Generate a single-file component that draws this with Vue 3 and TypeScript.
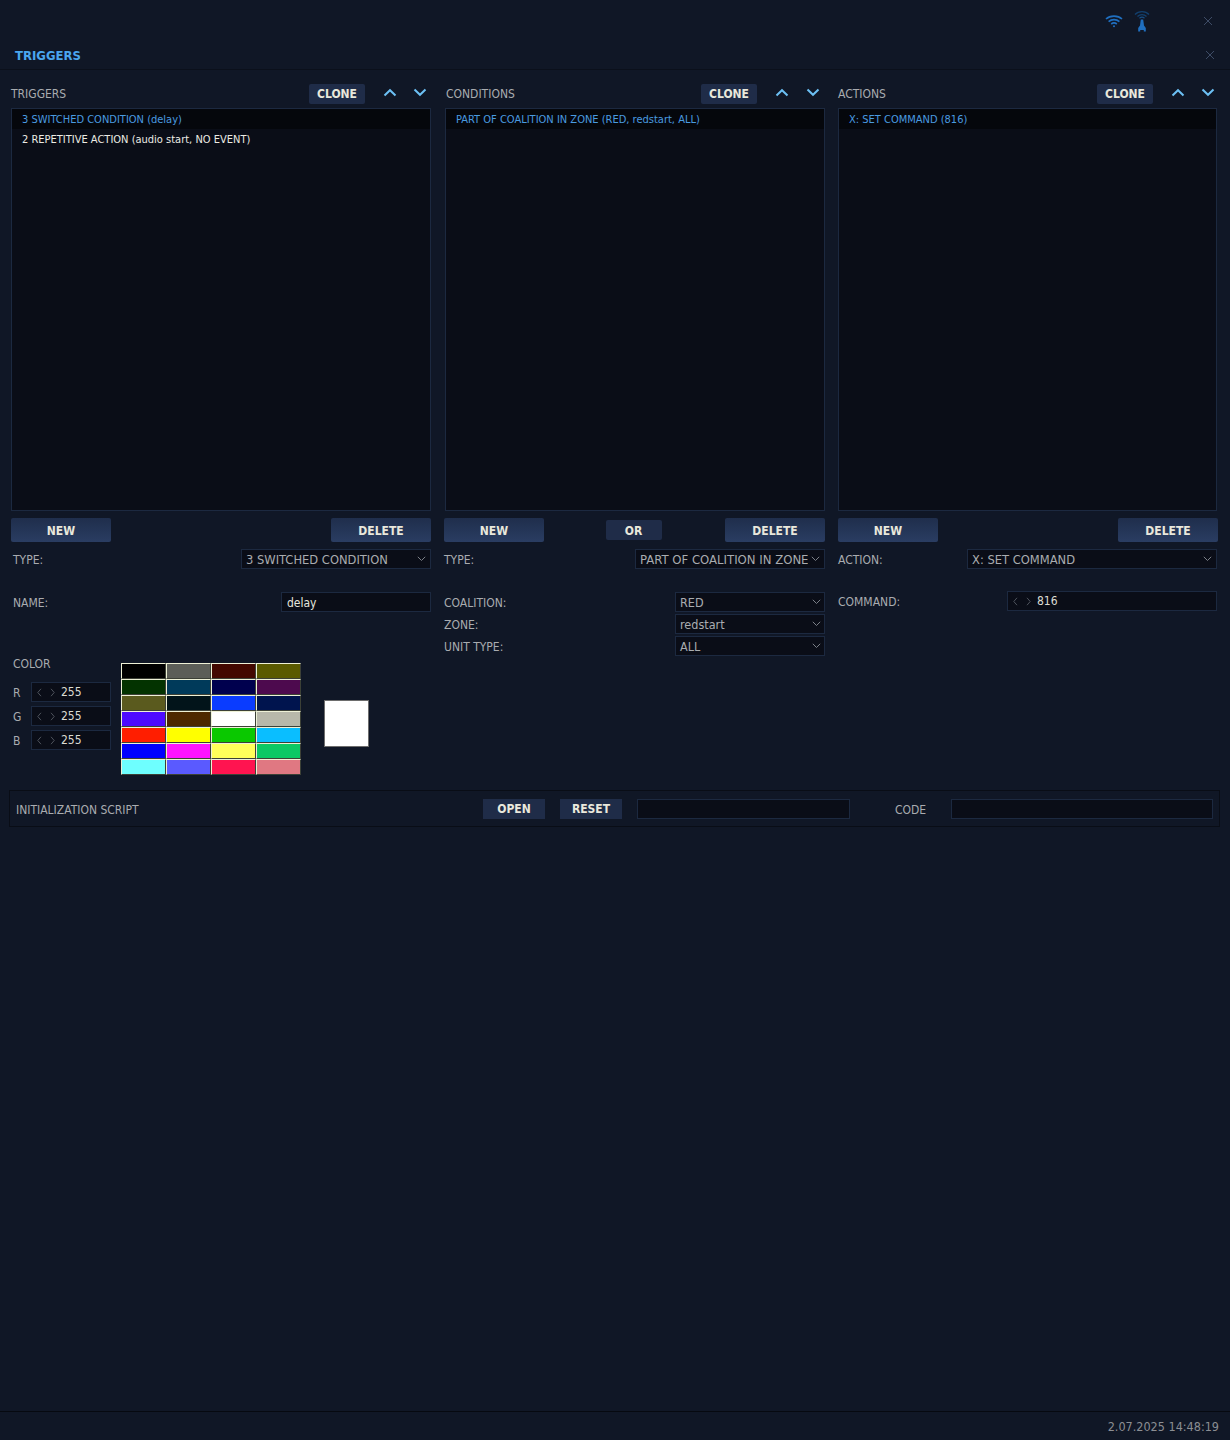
<script setup lang="ts">
const swatches: string[] = [
  '#000000', '#5c5e58', '#430800', '#5a5a00',
  '#033300', '#003a5a', '#00004e', '#4d0a4e',
  '#5a5a1e', '#02141a', '#0a3cff', '#00144e',
  '#4d0aff', '#4d2800', '#ffffff', '#b8b8aa',
  '#ff1e00', '#ffff00', '#0ac800', '#0abeff',
  '#0000ff', '#ff14ff', '#ffff5a', '#0ac864',
  '#6effff', '#5a5aff', '#ff1450', '#e07882',
]
const rgb = ['R', 'G', 'B']
const cond = [
  { label: 'COALITION:', value: 'RED' },
  { label: 'ZONE:', value: 'redstart' },
  { label: 'UNIT TYPE:', value: 'ALL' },
]
</script>

<template>
  <div class="page">
    <div class="status">
      <svg class="wifi" width="18" height="14" viewBox="0 0 18 14" fill="none" stroke="#1f6fc0" stroke-width="1.6">
        <path d="M1 5C5 1.2 13 1.2 17 5" />
        <path d="M3.6 7.6C6.6 5 11.4 5 14.4 7.6" />
        <path d="M6.2 10C8 8.6 10 8.6 11.8 10" />
        <circle cx="9" cy="12.2" r="1" fill="#1f6fc0" stroke="none" />
      </svg>
      <svg class="tower" width="16" height="22" viewBox="0 0 16 22" fill="none">
        <path d="M1 4.5C4.5 .6 11.5 .6 15 4.5" stroke="#12406e" stroke-width="1.3" />
        <path d="M3.5 6.5C6 4 10 4 12.5 6.5" stroke="#12406e" stroke-width="1.3" />
        <path d="M5.5 8.3C7 7 9 7 10.5 8.3" stroke="#174f86" stroke-width="1.2" />
        <path d="M6.8 9.5H9.2L10 15.5L11.8 18V21.5H9.8V20H6.2V21.5H4.2V18L6 15.5Z" fill="#1f6fc0" />
      </svg>
      <svg class="x x-top" width="10" height="10" viewBox="0 0 10 10" stroke="#3e4c66" stroke-width="1" fill="none">
        <path d="M1 1L9 9M9 1L1 9" />
      </svg>
    </div>

    <div class="titlebar">
      <span class="title">TRIGGERS</span>
      <svg class="x" width="10" height="10" viewBox="0 0 10 10" stroke="#3e4c66" stroke-width="1" fill="none">
        <path d="M1 1L9 9M9 1L1 9" />
      </svg>
    </div>

    <div class="columns">
      <section class="col col1">
        <header class="head">
          <span class="label">TRIGGERS</span>
          <button class="btn clone">CLONE</button>
          <svg class="arrow up" width="14" height="9" viewBox="0 0 14 9" fill="none" stroke="#6cc0f4" stroke-width="2"><path d="M1.5 7.5L7 2.2L12.5 7.5" /></svg>
          <svg class="arrow" width="14" height="9" viewBox="0 0 14 9" fill="none" stroke="#6cc0f4" stroke-width="2"><path d="M1.5 1.5L7 6.8L12.5 1.5" /></svg>
        </header>
        <div class="list">
          <div class="item selected pad1">3 SWITCHED CONDITION (delay)</div>
          <div class="item pad1">2 REPETITIVE ACTION (audio start, NO EVENT)</div>
        </div>
        <div class="actions">
          <button class="btn wide">NEW</button>
          <button class="btn wide">DELETE</button>
        </div>
        <div class="row">
          <span class="field-label inset">TYPE:</span>
          <div class="select type1">
            <span class="select-text">3 SWITCHED CONDITION</span>
            <svg class="caret" width="9" height="6" viewBox="0 0 9 6" fill="none" stroke="#7c8088"><path d="M.8 .8L4.5 4.5L8.2 .8" /></svg>
          </div>
        </div>
        <div class="row name-row">
          <span class="field-label inset">NAME:</span>
          <div class="input name"><span class="name-text">delay</span></div>
        </div>
        <div class="color">
          <div class="rgb">
            <span class="field-label color-title">COLOR</span>
            <div v-for="c in rgb" :key="c" class="rgb-row">
              <span class="field-label rgb-letter">{{ c }}</span>
              <div class="input spin rgb-input">
                <svg width="18" height="9" viewBox="0 0 18 9" fill="none" stroke="#4e535c"><path d="M4 .8L.8 4.5L4 8.2M14 .8L17.2 4.5L14 8.2" /></svg>
                <span>255</span>
              </div>
            </div>
          </div>
          <div class="palette">
            <div v-for="(s, i) in swatches" :key="i" class="swatch" :style="{ background: s }"></div>
          </div>
          <div class="preview"></div>
        </div>
      </section>

      <section class="col col2">
        <header class="head head2">
          <span class="label">CONDITIONS</span>
          <button class="btn clone">CLONE</button>
          <svg class="arrow up" width="14" height="9" viewBox="0 0 14 9" fill="none" stroke="#6cc0f4" stroke-width="2"><path d="M1.5 7.5L7 2.2L12.5 7.5" /></svg>
          <svg class="arrow" width="14" height="9" viewBox="0 0 14 9" fill="none" stroke="#6cc0f4" stroke-width="2"><path d="M1.5 1.5L7 6.8L12.5 1.5" /></svg>
        </header>
        <div class="list list2">
          <div class="item selected pad2">PART OF COALITION IN ZONE (RED, redstart, ALL)</div>
        </div>
        <div class="actions">
          <button class="btn wide">NEW</button>
          <button class="btn small">OR</button>
          <button class="btn wide">DELETE</button>
        </div>
        <div class="row">
          <span class="field-label">TYPE:</span>
          <div class="select type2">
            <span class="select-text clip">PART OF COALITION IN ZONE</span>
            <svg class="caret" width="9" height="6" viewBox="0 0 9 6" fill="none" stroke="#7c8088"><path d="M.8 .8L4.5 4.5L8.2 .8" /></svg>
          </div>
        </div>
        <div class="stack">
          <div v-for="f in cond" :key="f.label" class="row">
            <span class="field-label">{{ f.label }}</span>
            <div class="select short">
              <span class="select-text">{{ f.value }}</span>
              <svg class="caret" width="9" height="6" viewBox="0 0 9 6" fill="none" stroke="#7c8088"><path d="M.8 .8L4.5 4.5L8.2 .8" /></svg>
            </div>
          </div>
        </div>
      </section>

      <section class="col col3">
        <header class="head">
          <span class="label">ACTIONS</span>
          <button class="btn clone">CLONE</button>
          <svg class="arrow up" width="14" height="9" viewBox="0 0 14 9" fill="none" stroke="#6cc0f4" stroke-width="2"><path d="M1.5 7.5L7 2.2L12.5 7.5" /></svg>
          <svg class="arrow" width="14" height="9" viewBox="0 0 14 9" fill="none" stroke="#6cc0f4" stroke-width="2"><path d="M1.5 1.5L7 6.8L12.5 1.5" /></svg>
        </header>
        <div class="list">
          <div class="item selected pad3">X: SET COMMAND (816)</div>
        </div>
        <div class="actions actions3">
          <button class="btn wide">NEW</button>
          <button class="btn wide">DELETE</button>
        </div>
        <div class="row">
          <span class="field-label">ACTION:</span>
          <div class="select type3">
            <span class="select-text">X: SET COMMAND</span>
            <svg class="caret" width="9" height="6" viewBox="0 0 9 6" fill="none" stroke="#7c8088"><path d="M.8 .8L4.5 4.5L8.2 .8" /></svg>
          </div>
        </div>
        <div class="row name-row command-row">
          <span class="field-label">COMMAND:</span>
          <div class="input spin command">
            <svg width="18" height="9" viewBox="0 0 18 9" fill="none" stroke="#4e535c"><path d="M4 .8L.8 4.5L4 8.2M14 .8L17.2 4.5L14 8.2" /></svg>
            <span>816</span>
          </div>
        </div>
      </section>
    </div>

    <div class="script">
      <span class="label nowrap script-label">INITIALIZATION SCRIPT</span>
      <button class="btn flat open">OPEN</button>
      <button class="btn flat reset">RESET</button>
      <div class="input script-path"></div>
      <span class="label code">CODE</span>
      <div class="input script-code"></div>
    </div>

    <footer class="footer">2.07.2025 14:48:19</footer>
  </div>
</template>

<style>
html,
body {
  margin: 0;
  background: #101726;
}
</style>

<style scoped>
.page {
  width: 1230px;
  height: 1440px;
  display: flex;
  flex-direction: column;
  background: #101726;
  font-family: "DejaVu Sans Condensed", "DejaVu Sans", sans-serif;
  font-stretch: condensed;
  font-size: 12px;
  color: #a9acb0;
  overflow: hidden;
}
.status {
  height: 38px;
  display: flex;
  align-items: center;
  flex-shrink: 0;
  padding-top: 4px;
  box-sizing: border-box;
}
.wifi { margin-left: 1105px; }
.tower { margin-left: 11px; }
.x-top { margin-left: 53px; }
.titlebar {
  height: 32px;
  box-sizing: border-box;
  flex-shrink: 0;
  display: flex;
  align-items: center;
  justify-content: space-between;
  padding: 3px 15px 0 15px;
  border-bottom: 1px solid #0b101b;
}
.title {
  font-weight: 700;
  font-size: 13px;
  color: #4aa6ee;
}
.columns {
  display: grid;
  grid-template-columns: 420px 381px 379px;
  column-gap: 13px;
  padding: 0 0 0 11px;
  height: 720px;
  flex-shrink: 0;
}
.col { min-width: 0; }
.head {
  height: 38px;
  box-sizing: border-box;
  display: flex;
  align-items: center;
  padding-top: 9px;
}
.label {
  font-size: 12px;
  color: #a9acb0;
}
.head .label { padding-top: 1px; }
.nowrap { white-space: nowrap; }
.head .label { margin-right: auto; }
.btn {
  border: 0;
  padding: 0;
  font-family: inherit;
  font-stretch: condensed;
  font-weight: 700;
  font-size: 12px;
  color: #e9e8dc;
  background: #1f2c48;
  border-radius: 2px;
}
.clone {
  width: 56px;
  height: 20px;
  margin-right: 18px;
}
.arrow { margin-right: 4px; margin-top: -2px; }
.arrow.up { margin-right: 16px; }
.head2 { padding-left: 2px; }
.head2 .arrow { margin-right: 5px; }
.head2 .arrow.up { margin-right: 17px; }
.col3 .arrow { margin-right: 2px; }
.col3 .arrow.up { margin-right: 16px; }
.list {
  height: 403px;
  box-sizing: border-box;
  background: #0a0d17;
  border: 1px solid #1c2940;
}
.list2 { margin-left: 1px; }
.item {
  height: 20px;
  line-height: 20px;
  padding-top: 1px;
  font-size: 11px;
  color: #ecebe4;
  box-sizing: border-box;
  white-space: nowrap;
}
.item.selected {
  background: #05070c;
  color: #4a9be0;
}
.pad1 { padding-left: 10px; }
.pad2 { padding-left: 10px; }
.pad3 { padding-left: 10px; }
.actions {
  display: flex;
  align-items: center;
  justify-content: space-between;
  margin-top: 7px;
  height: 24px;
}
.actions3 { margin-right: -1px; }
.wide {
  width: 100px;
  height: 24px;
  padding-top: 1px;
  background: linear-gradient(#1f2e4c, #2a3d62);
  border-radius: 2px;
}
.small {
  width: 56px;
  height: 20px;
  margin-left: -2px;
  padding-top: 1px;
}
.row {
  display: flex;
  align-items: center;
  justify-content: space-between;
  height: 22px;
}
.col > .row { margin-top: 6px; }
.col > .row.name-row { margin-top: 21px; }
.col > .row.command-row { margin-top: 20px; }
.field-label { font-size: 12px; color: #a9acb0; padding-top: 1px; }
.inset { padding-left: 2px; }
.select,
.input {
  height: 20px;
  box-sizing: border-box;
  background: #0a0d17;
  border: 1px solid #1c2940;
  display: flex;
  align-items: center;
  color: #a9acb0;
  position: relative;
  font-size: 12.8px;
}
.select { padding-left: 4px; }
.select-text { white-space: nowrap; }
.clip {
  width: 168px;
  overflow: hidden;
  font-size: 13px;
}
.caret {
  position: absolute;
  right: 4px;
  top: 6px;
}
.type1 { width: 190px; }
.type2 { width: 190px; }
.type3 { width: 250px; }
.short { width: 150px; }
.short .select-text { font-size: 12.5px; padding-top: 1px; }
.short .caret { right: 3px; }
.stack {
  margin-top: 21px;
}
.input.name {
  width: 150px;
  padding-left: 5px;
  font-size: 12px;
  color: #e6e6de;
}
.name-text { padding-top: 2px; }
.color {
  display: flex;
  align-items: flex-start;
  margin-top: 50px;
  padding-left: 2px;
}
.rgb {
  width: 108px;
  display: flex;
  flex-direction: column;
  margin-top: -7px;
}
.color-title { height: 23px; line-height: 15px; }
.rgb-row {
  display: flex;
  align-items: center;
  height: 24px;
}
.rgb-letter { width: 18px; }
.spin { gap: 6px; padding-left: 5px; color: #dcdcd4; font-size: 12px; }
.spin svg { flex-shrink: 0; }
.rgb-input { width: 80px; }
.command { width: 210px; }
.palette {
  display: grid;
  grid-template-columns: repeat(4, 45px);
  grid-auto-rows: 16px;
}
.swatch {
  box-sizing: border-box;
  border: 1px solid;
  border-color: #eef1d6 #3c4036 #3c4036 #eef1d6;
}
.preview {
  width: 45px;
  height: 47px;
  box-sizing: border-box;
  background: #fff;
  border: 1px solid #6d6d6d;
  margin: 37px 0 0 23px;
}
.script {
  margin: 0 10px 0 9px;
  height: 37px;
  flex-shrink: 0;
  box-sizing: border-box;
  border: 1px solid #090d16;
  display: flex;
  align-items: center;
  padding-left: 6px;
}
.script-label { width: 124px; flex-shrink: 0; padding-top: 2px; }
.flat {
  height: 20px;
  width: 62px;
  border-radius: 0;
  flex-shrink: 0;
  padding-top: 1px;
}
.open { margin-left: 343px; }
.reset { margin-left: 15px; }
.script-path { width: 213px; margin-left: 15px; flex-shrink: 0; }
.code { margin-left: 45px; width: 32px; flex-shrink: 0; padding-top: 2px; }
.script-code { width: 262px; margin-left: 24px; flex-shrink: 0; }
.footer {
  margin-top: auto;
  height: 29px;
  box-sizing: border-box;
  border-top: 1px solid #060910;
  text-align: right;
  padding: 7px 11px 0 0;
  color: #8b8e93;
  font-size: 12.5px;
  flex-shrink: 0;
}
</style>
